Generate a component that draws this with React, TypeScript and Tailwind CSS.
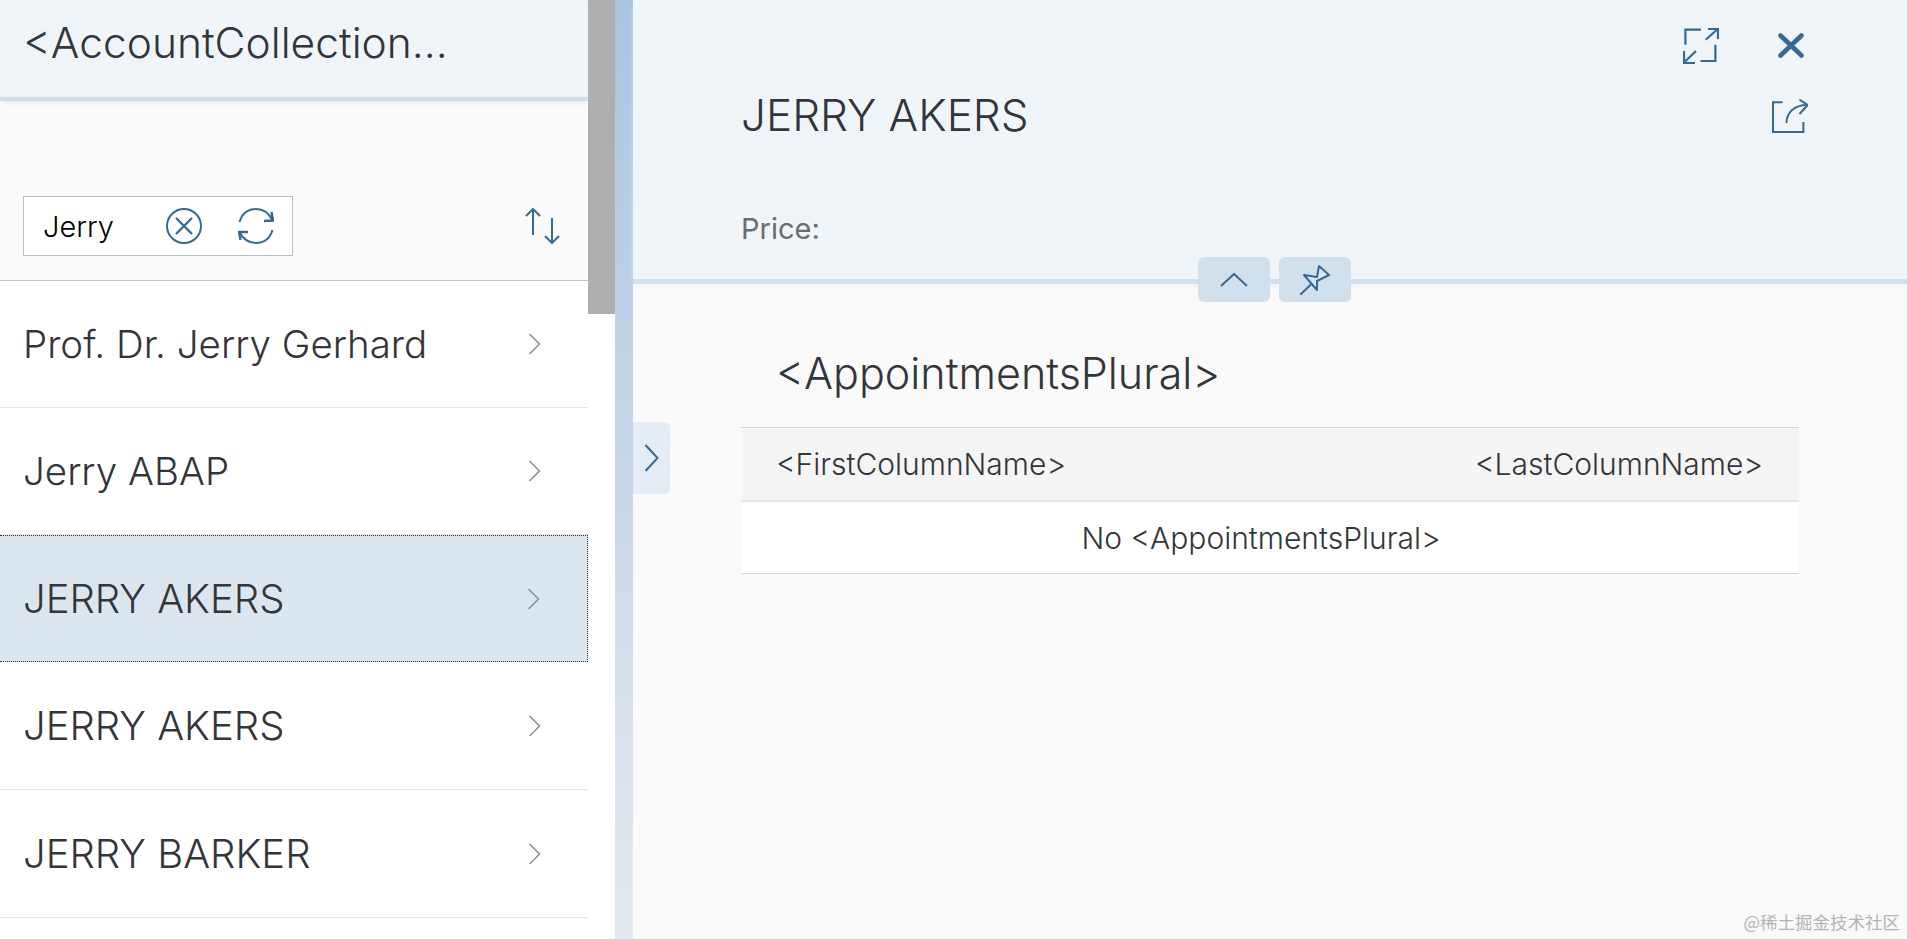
import React from "react";

const blue = "#366a94";

function Chevron() {
  return (
    <svg width="13" height="22" viewBox="0 0 13 22" fill="none" stroke="#8b9299" strokeWidth="1.6">
      <path d="M1.5 1 L11.5 11 L1.5 21" />
    </svg>
  );
}

function Row({ name, active, caps, tall }: { name: string; active?: boolean; caps?: boolean; tall?: boolean }) {
  return (
    <div
      className={
        (tall ? "h-[128px] pt-[1px] " : "h-[127px] ") +
        (active
          ? "flex items-center justify-between pl-[23px] pr-[47px] bg-[#dce6ee] border border-dotted border-[#333] border-l-0"
          : "flex items-center justify-between pl-[23px] pr-[47px] bg-white border-b border-[#e5e5e5]")
      }
    >
      <span className={caps ? "text-[40px] leading-none text-[#32363a] font-[350]" : "text-[38.500px] leading-none text-[#32363a] font-[350]"}>{name}</span>
      <Chevron />
    </div>
  );
}

export default function App() {
  return (
    <div className="w-[1907px] h-[939px] flex overflow-hidden bg-[#fafafa] font-['Inter',sans-serif] relative">
      {/* Master */}
      <div className="w-[615px] h-full flex bg-white">
        <div className="w-[588px] flex flex-col">
          <div className="h-[101px] shrink-0 flex items-center pl-[23px] pb-[11px] bg-[#f0f5f9] border-b-4 border-[#cfdfec] shadow-[0_5px_3px_-2px_#eaf1f7] relative">
            <span className="text-[42.500px] leading-none text-[#32363a] font-[350]">&lt;AccountCollection...</span>
          </div>
          <div className="h-[179px] shrink-0 flex items-end justify-between pl-[23px] pr-[27px] pb-[24px] bg-[#fafafa]">
            <div className="w-[270px] h-[60px] flex items-center bg-white border border-[#bfbfbf] pl-[19px] pr-[18px]">
              <span className="text-[29px] leading-none text-black flex-1 font-[350]">Jerry</span>
              <svg width="36" height="36" viewBox="0 0 36 36" fill="none" stroke={blue} strokeWidth="2">
                <circle cx="18" cy="18" r="17" />
                <path d="M10 10 L26 26 M26 10 L10 26" strokeWidth="2.4" />
              </svg>
              <svg className="ml-[36px]" width="36" height="36" viewBox="0 0 36 36" fill="none" stroke={blue} strokeWidth="2">
                <path d="M1.5 14 C4 6 10 1 18 1 C25 1 31 5 34.5 12.5" />
                <path d="M26 13 L35 12.5 L33.5 4" strokeWidth="2.4" />
                <path d="M34.5 22 C32 30 26 35 18 35 C11 35 5 31 1.5 24" />
                <path d="M10 24 L1 24 L2.500 32" strokeWidth="2.4" />
              </svg>
            </div>
            <svg className="mb-[12px]" width="36" height="36" viewBox="0 0 36 36" fill="none" stroke={blue} strokeWidth="2">
              <path d="M8 1 L8 27 M1 8 L8 1 L15 8" />
              <path d="M27 10 L27 35 M20 28 L27 35 L34 28" />
            </svg>
          </div>
          <div className="flex-1 border-t border-[#c4c4c4] bg-white">
            <Row name="Prof. Dr. Jerry Gerhard" />
            <Row name="Jerry ABAP" />
            <Row name="JERRY AKERS" active caps />
            <Row name="JERRY AKERS" caps tall />
            <Row name="JERRY BARKER" caps tall />
          </div>
        </div>
        <div className="w-[27px] h-full">
          <div className="w-full h-[314px] bg-[#afafaf]" />
        </div>
      </div>

      {/* Divider */}
      <div className="w-[18px] h-full shrink-0 bg-gradient-to-b from-[#a9c5e1] to-[#e6eaf0]" />

      {/* Detail */}
      <div className="flex-1 flex flex-col relative">
        <div className="h-[284px] shrink-0 flex flex-col bg-[#f0f5f9] border-b-[5px] border-[#cfe0ee] shadow-[0_5px_5px_-2px_#f0f5fa] pt-[28px] pl-[108px]">
          <div className="h-[35px] flex items-center justify-end pr-[103px]">
            <svg width="36" height="36" viewBox="0 0 36 36" fill="none" stroke={blue} strokeWidth="2.2">
              <path d="M2.400 16.700 L2.400 1.700 L18 1.700" />
              <path d="M32.400 16.700 L32.400 33 L17.500 33" />
              <path d="M22.700 11.700 L34.800 1 M25 1 L35 1 L35 11" />
              <path d="M13 23 L1 34.500 M1 23 L1 35 L12 35" />
            </svg>
            <svg className="ml-[59px]" width="26" height="25" viewBox="0 0 26 25" fill="none" stroke={blue} strokeWidth="4.6" strokeLinecap="round">
              <path d="M2.500 2.500 L23.500 22.500 M23.500 2.500 L2.500 22.500" />
            </svg>
          </div>
          <div className="mt-[22px] h-[60px] flex items-center justify-between pr-[99px]">
            <span className="text-[44px] leading-none text-[#32363a] font-[350]">JERRY AKERS</span>
            <svg className="mt-[2px]" width="36" height="34" viewBox="0 0 36 34" fill="none" stroke={blue} strokeWidth="2">
              <path d="M10.600 3.300 L1 3.300 L1 33 L31.400 33 L31.400 23" />
              <path d="M14.500 24 C14.500 14 22 6 35 6" />
              <path d="M27.500 0.700 L35.700 6 L27.500 15" />
            </svg>
          </div>
          <div className="mt-[64px] text-[29px] leading-[40px] text-[#6a6d70] font-normal">Price:</div>
        </div>

        <div className="flex-1 flex flex-col pl-[108px]">
          <div className="h-[143px] shrink-0 flex items-center pl-[35px] pt-[35px] text-[43px] leading-none text-[#32363a] font-[350]">
            &lt;AppointmentsPlural&gt;
          </div>
          <div className="w-[1058px] flex flex-col">
            <div className="h-[75px] flex items-center justify-between pl-[35px] pr-[36px] bg-[#f5f5f5] border-t border-b-2 border-t-[#d4d4d4] border-b-[#e5e5e5] text-[30px] leading-none text-[#32363a] font-[350]">
              <span>&lt;FirstColumnName&gt;</span>
              <span>&lt;LastColumnName&gt;</span>
            </div>
            <div className="h-[72px] flex items-center justify-center pr-[18px] bg-white border-b border-[#d4d4d4] text-[30px] leading-none text-[#32363a] font-[350]">
              No &lt;AppointmentsPlural&gt;
            </div>
          </div>
        </div>

        {/* Toggle buttons over the header edge */}
        <div className="absolute left-[565px] top-[257px] flex gap-[9px]">
          <div className="w-[72px] h-[45px] rounded-[6px] bg-[#d1e0ed] flex items-center justify-center">
            <svg width="28" height="14" viewBox="0 0 28 14" fill="none" stroke={blue} strokeWidth="2">
              <path d="M1 13 L14 1 L27 13" />
            </svg>
          </div>
          <div className="w-[72px] h-[45px] rounded-[6px] bg-[#d1e0ed] flex items-center justify-center">
            <svg width="32" height="32" viewBox="0 0 32 32" fill="none" stroke={blue} strokeWidth="2" strokeLinejoin="round" strokeLinecap="round">
              <path d="M2 30 L12.700 19.700" />
              <path d="M5 11 L18 13 L20 2 L30 11 L18 17 L18 26 Z" fill="#d9e7f3" />
            </svg>
          </div>
        </div>

        {/* Collapse tab */}
        <div className="absolute left-0 top-[422px] w-[37px] h-[72px] bg-[#e4ecf6] rounded-r-[5px] flex items-center justify-center">
          <svg width="15" height="28" viewBox="0 0 15 28" fill="none" stroke={blue} strokeWidth="2">
            <path d="M1.500 1 L13.500 14 L1.500 27" />
          </svg>
        </div>
      </div>

      {/* Watermark */}
      <div className="absolute right-[7px] bottom-[6px] text-[17.500px] leading-[22px] text-[#b4b4b4] font-['Noto_Sans_CJK_SC','Noto_Sans',sans-serif]">
        @稀土掘金技术社区
      </div>
    </div>
  );
}
